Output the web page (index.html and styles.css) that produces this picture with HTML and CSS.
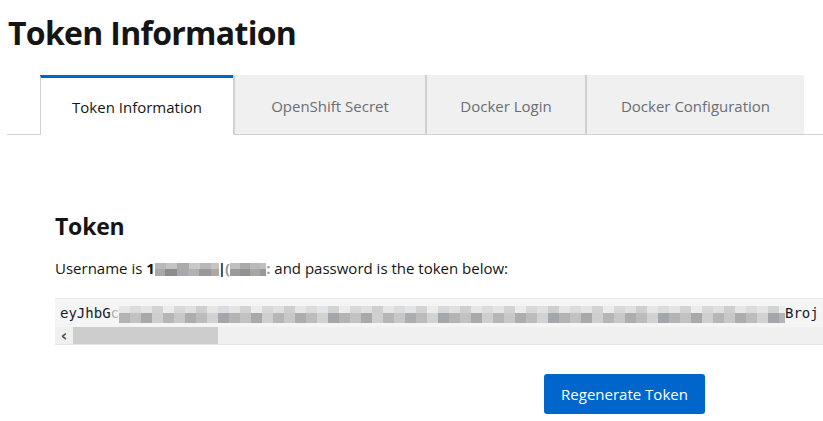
FILE: index.html
```html
<!DOCTYPE html>
<html lang="en">
<head>
<meta charset="utf-8">
<title>Token Information</title>
<link rel="stylesheet" href="styles.css">
</head>
<body>
  <h1 class="page-title">Token Information</h1>
  <div class="tabs">
    <ul class="tab-list">
      <li class="tab tab-active">Token Information</li>
      <li class="tab tab-secret">OpenShift Secret</li>
      <li class="tab tab-login">Docker Login</li>
      <li class="tab tab-config">Docker Configuration</li>
    </ul>
  </div>
  <section class="panel">
    <h2 class="section-title">Token</h2>
    <p class="username">Username is <strong class="user">1<span class="mosaic mosaic-user-a"></span><span class="bar">|</span><span class="faded">(</span><span class="mosaic mosaic-user-b"></span><span class="faded">:</span></strong> and password is the token below:</p>
    <div class="code-box">
      <pre class="code-line">eyJhbG<span class="faded-code">c</span><span class="mosaic mosaic-code"></span>Broj</pre>
      <div class="scrollbar">
        <span class="scroll-arrow">‹</span>
        <span class="scroll-thumb"></span>
      </div>
    </div>
    <div class="actions">
      <button class="btn-primary" type="button">Regenerate Token</button>
    </div>
  </section>
</body>
</html>
```
FILE: styles.css
```css
html, body {
  margin: 0;
  padding: 0;
  background: #fff;
  overflow: hidden;
}

body {
  font-family: "Open Sans", "Noto Sans", sans-serif;
  color: #151515;
}

.page-title {
  margin: 13px 0 0 8px;
  font-size: 32px;
  line-height: 40px;
  font-weight: 700;
  letter-spacing: -0.7px;
}

.tabs {
  margin: 22px 0 0 7px;
  padding-left: 33px;
  border-bottom: 1px solid #d2d2d2;
  height: 59px;
}

.tab-list {
  display: flex;
  margin: 0;
  padding: 0;
  list-style: none;
  height: 59px;
}

.tab {
  box-sizing: border-box;
  display: flex;
  align-items: center;
  justify-content: center;
  height: 59px;
  padding-top: 3px;
  background: #f0f0f0;
  border-left: 2px solid #d0d0d0;
  color: #6a6e73;
  font-size: 15px;
  white-space: nowrap;
}

.tab-active {
  width: 193px;
  height: 60px;
  margin-bottom: -1px;
  padding-top: 0;
  background: #fff;
  border-top: 3px solid #0066cc;
  border-left: 1px solid #d2d2d2;
  color: #151515;
}

.tab-secret { width: 192px; }
.tab-login { width: 160px; }
.tab-config { width: 219px; }

.panel {
  padding: 76px 0 0 55px;
}

.section-title {
  margin: 0;
  font-size: 23px;
  line-height: 30px;
  font-weight: 700;
  letter-spacing: -0.2px;
}

.username {
  margin: 15px 0 0;
  font-size: 15px;
  line-height: 24px;
}

.user {
  font-weight: 700;
}

.bar {
  margin: 0 -1px;
  color: #2b2b10;
}

.faded {
  color: #9a9a9a;
}

.mosaic {
  display: inline-block;
  vertical-align: -2px;
}

.mosaic-user-a {
  width: 64px;
  height: 13px;
  background:
    repeating-linear-gradient(90deg, #b8b8b8 0 11px, #c4c4c4 11px 22px, #ababab 22px 34px, #c9c9cb 34px 45px) top / 100% 6px no-repeat,
    repeating-linear-gradient(90deg, #a8a8a8 0 10px, #8c8c8c 10px 22px, #a6a9ae 22px 33px, #b2b2b2 33px 44px, #999 44px 56px) bottom / 100% 7px no-repeat;
}

.mosaic-user-b {
  width: 36px;
  height: 13px;
  background:
    repeating-linear-gradient(90deg, #c0c0c0 0 10px, #a9a9a9 10px 20px, #b9b9b9 20px 30px) top / 100% 6px no-repeat,
    repeating-linear-gradient(90deg, #9a9a9a 0 10px, #8f9296 10px 20px, #a8a5a2 20px 30px, #999 30px 40px) bottom / 100% 7px no-repeat;
}

.code-box {
  margin-top: 18px;
  background: #f5f5f5;
  border-top: 1px solid #ebebeb;
}

.code-line {
  margin: 0;
  height: 28px;
  padding: 0 0 0 5px;
  font-family: "DejaVu Sans Mono", "Liberation Mono", monospace;
  font-size: 14px;
  line-height: 28px;
  color: #151c2c;
  white-space: nowrap;
  overflow: hidden;
}

.faded-code {
  color: #b0b0b0;
}

.mosaic-code {
  width: 666px;
  height: 17px;
  vertical-align: -5px;
  background:
    repeating-linear-gradient(90deg, #e6e6e6 0 11px, #dcdcdc 11px 22px, #e2e4e6 22px 33px, #d3d3d3 33px 44px, #ececec 44px 55px, #d8d8d8 55px 66px, #e0e0e0 66px 77px, #cfcfcf 77px 88px) top / 100% 7px no-repeat,
    repeating-linear-gradient(90deg, #b4b4b4 0 11px, #c2c2c2 11px 22px, #a9a9a9 22px 33px, #cfcfcf 33px 44px, #b8b6b4 44px 55px, #c6c8ca 55px 66px, #adadad 66px 77px, #bcbcbc 77px 88px, #d2d2d2 88px 99px, #a3a6aa 99px 110px) bottom / 100% 10px no-repeat;
}

.scrollbar {
  display: flex;
  align-items: center;
  height: 17px;
  background: #f0f0f0;
  border-bottom: 1px solid #e6e6e6;
}

.scroll-arrow {
  width: 18px;
  text-align: center;
  font-family: "DejaVu Sans", sans-serif;
  font-size: 16px;
  font-weight: 700;
  line-height: 17px;
  color: #505050;
}

.scroll-thumb {
  width: 145px;
  height: 17px;
  background: #cdcdcd;
}

.actions {
  margin-top: 29px;
  padding-left: 489px;
}

.btn-primary {
  width: 161px;
  height: 40px;
  padding: 0;
  border: 0;
  border-radius: 3px;
  background: #0066cc;
  color: #fff;
  font-family: "Open Sans", "Noto Sans", sans-serif;
  font-size: 15px;
}
```
